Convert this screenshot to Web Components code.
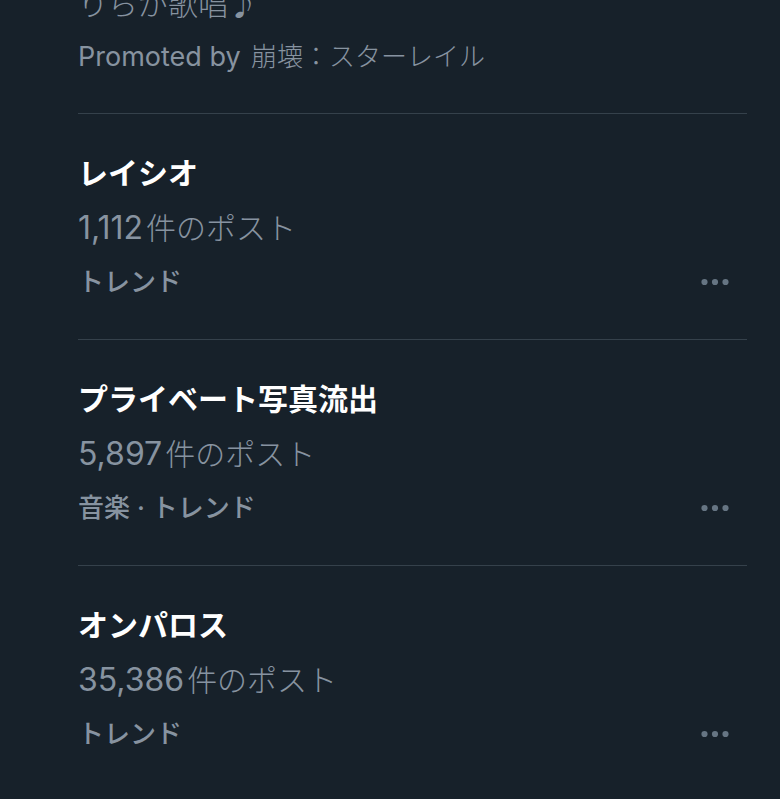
<!DOCTYPE html>
<html lang="ja">
<head>
<meta charset="utf-8">
<meta name="viewport" content="width=device-width, initial-scale=1">
<title>トレンド</title>
<style>
  body {
    margin: 0;
    background-color: #17212a;
    color: #8793a0;
    font-family: Inter, 'Noto Sans CJK JP', sans-serif;
  }
</style>
</head>
<body>
<trend-list>
  <promoted-trend sponsor="崩壊：スターレイル">りらが歌唱♪</promoted-trend>
  <trend-item count="1,112" category="トレンド">レイシオ</trend-item>
  <trend-item count="5,897" category="音楽 · トレンド">プライベート写真流出</trend-item>
  <trend-item count="35,386" category="トレンド">オンパロス</trend-item>
</trend-list>

<script>
const listTemplate = document.createElement('template');
listTemplate.innerHTML = `
    <style>
        :host {
            display: block;
            padding: 0 33px 0 78px;
        }

        ::slotted(:not(:last-child)) {
            border-bottom: 1px solid #35414b;
        }
    </style>

    <slot></slot>
`;

class TrendList extends HTMLElement {
  constructor() {
    super();
    this.attachShadow({ mode: 'open' });
    this.shadowRoot.appendChild(listTemplate.content.cloneNode(true));
  }
}

customElements.define('trend-list', TrendList);

const promotedTemplate = document.createElement('template');
promotedTemplate.innerHTML = `
    <style>
        :host {
            display: block;
            margin-top: -23px;
            padding-bottom: 30px;
        }

        p {
            margin: 0;
        }

        .description {
            font-size: 30px;
            font-weight: 300;
            line-height: 54px;
        }

        .sponsor {
            font-size: 26px;
            font-weight: 300;
            line-height: 52px;
        }

        .latin {
            margin-right: 3px;
            font-size: 27px;
            font-weight: 400;
        }
    </style>

    <p class="description"><slot></slot></p>
    <p class="sponsor"><span class="latin">Promoted by</span> <span class="name"></span></p>
`;

class PromotedTrend extends HTMLElement {
  constructor() {
    super();
    this.attachShadow({ mode: 'open' });
    this.shadowRoot.appendChild(promotedTemplate.content.cloneNode(true));
  }

  connectedCallback() {
    this.shadowRoot.querySelector('.name').textContent = this.getAttribute('sponsor');
  }
}

customElements.define('promoted-trend', PromotedTrend);

const itemTemplate = document.createElement('template');
itemTemplate.innerHTML = `
    <style>
        :host {
            display: block;
            padding: 32px 0 31px;
        }

        h2, p {
            margin: 0;
        }

        h2 {
            color: #fff;
            font-size: 30px;
            font-weight: 700;
            line-height: 54px;
        }

        .posts {
            font-size: 30px;
            font-weight: 300;
            line-height: 56px;
        }

        .count {
            margin-right: 3px;
            font-size: 32px;
            font-weight: 400;
        }

        .footer {
            display: flex;
            align-items: center;
            justify-content: space-between;
            padding-right: 12px;
        }

        .category {
            font-size: 26px;
            font-weight: 500;
            line-height: 52px;
        }

        button {
            display: flex;
            padding: 4px;
            border: 0;
            background: none;
            color: #667583;
            cursor: pointer;
        }
    </style>

    <h2><slot></slot></h2>
    <p class="posts"><span class="count"></span>件のポスト</p>
    <div class="footer">
        <p class="category"></p>
        <button type="button" aria-label="もっと見る">
            <svg width="30" height="8" viewBox="0 0 30 8" fill="currentColor" aria-hidden="true">
                <circle cx="3.5" cy="4" r="3.1"/>
                <circle cx="14" cy="4" r="3.1"/>
                <circle cx="24.5" cy="4" r="3.1"/>
            </svg>
        </button>
    </div>
`;

class TrendItem extends HTMLElement {
  constructor() {
    super();
    this.attachShadow({ mode: 'open' });
    this.shadowRoot.appendChild(itemTemplate.content.cloneNode(true));
  }

  connectedCallback() {
    this.shadowRoot.querySelector('.count').textContent = this.getAttribute('count');
    this.shadowRoot.querySelector('.category').textContent = this.getAttribute('category');
  }
}

customElements.define('trend-item', TrendItem);
</script>
</body>
</html>
